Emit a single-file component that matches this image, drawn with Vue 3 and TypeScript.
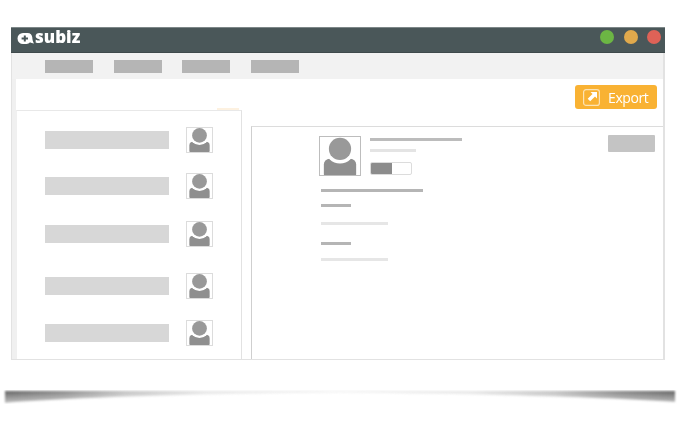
<script setup lang="ts">
const navItems = [1, 2, 3, 4];
const rows = [1, 2, 3, 4, 5];
</script>

<template>
  <div class="page">
    <div class="window">
      <header class="titlebar">
        <div class="logo">
          <svg class="logo-mark" width="17" height="11" viewBox="0 0 17 11">
            <path d="M6 0h4.500c3 0 4.500 2 4.800 4.500.1 2 .5 4 1.700 6-1.500-.1-3-.5-4-1.200C12 10.300 11 11 9.500 11H6A5.500 5.500 0 0 1 6 0z" fill="#fff" />
            <path d="M6.800 2.600h2v2h2.200v2H8.800v2h-2v-2H4.600v-2h2.200z" fill="#4a5759" />
          </svg>
          <span class="logo-text">subiz</span>
        </div>
        <div class="dots">
          <span class="dot green"></span>
          <span class="dot amber"></span>
          <span class="dot red"></span>
        </div>
      </header>

      <nav class="nav">
        <span v-for="n in navItems" :key="n" class="nav-item"></span>
      </nav>

      <div class="content">
        <div class="toolbar">
          <button class="export">
            <svg width="17" height="17" viewBox="0 0 17 17">
              <rect x="0.600" y="0.600" width="15.800" height="15.800" rx="2.500" fill="none" stroke="#fce3b4" stroke-width="1.200" />
              <path d="M7.500 3h6.500v6.500l-2-2-4.800 4.800-2.500-2.500 4.800-4.800z" fill="#fff" />
            </svg>
            <span>Export</span>
          </button>
        </div>

        <div class="panels">
          <aside class="list">
            <div v-for="r in rows" :key="r" class="row">
              <span class="row-bar"></span>
              <span class="avatar small">
                <svg viewBox="0 0 27 26">
                  <rect x="2.500" y="15" width="22" height="13" rx="4" fill="#8f8f8f" />
                  <circle cx="13.500" cy="8" r="10.500" fill="#fff" />
                  <circle cx="13.500" cy="8" r="8" fill="#999" />
                </svg>
              </span>
            </div>
          </aside>

          <main class="detail">
            <div class="detail-top">
              <span class="avatar big">
                <svg viewBox="0 0 42 40">
                  <rect x="4" y="23" width="34" height="22" rx="6" fill="#8f8f8f" />
                  <circle cx="21" cy="12.500" r="15.500" fill="#fff" />
                  <circle cx="21" cy="12.500" r="11.700" fill="#999" />
                </svg>
              </span>
              <div class="summary">
                <span class="line name"></span>
                <span class="line sub"></span>
                <span class="toggle"><span class="toggle-on"></span></span>
              </div>
              <span class="action"></span>
            </div>
            <div class="fields">
              <span class="line heading"></span>
              <span class="line label"></span>
              <span class="line value"></span>
              <span class="line label second"></span>
              <span class="line value last"></span>
            </div>
          </main>
        </div>
      </div>
    </div>

    <svg class="shadow" width="680" height="16" viewBox="0 0 680 16">
      <defs>
        <linearGradient id="sh" x1="0" x2="1" y1="0" y2="0">
          <stop offset="0" stop-color="#5c5c5c" />
          <stop offset="0.08" stop-color="#808080" />
          <stop offset="0.18" stop-color="#c0c0c0" />
          <stop offset="0.3" stop-color="#e6e6e6" />
          <stop offset="0.5" stop-color="#f0f0f0" />
          <stop offset="0.7" stop-color="#e6e6e6" />
          <stop offset="0.82" stop-color="#c0c0c0" />
          <stop offset="0.92" stop-color="#808080" />
          <stop offset="1" stop-color="#5c5c5c" />
        </linearGradient>
        <linearGradient id="fade" x1="0" x2="0" y1="0" y2="1">
          <stop offset="0" stop-color="#fff" />
          <stop offset="1" stop-color="#555" />
        </linearGradient>
        <mask id="fadeMask" maskUnits="userSpaceOnUse" x="0" y="0" width="680" height="16">
          <rect width="680" height="14" fill="url(#fade)" />
        </mask>
        <filter id="soft" x="-5%" y="-50%" width="110%" height="200%"><feGaussianBlur stdDeviation="1" /></filter>
      </defs>
      <g mask="url(#fadeMask)">
        <path d="M5 1H675V12C600 7 480 4 340 2.500 200 4 80 7 5 13z" fill="url(#sh)" filter="url(#soft)" />
      </g>
    </svg>
  </div>
</template>

<style scoped>
.page {
  width: 680px;
  height: 421px;
  overflow: hidden;
  padding-top: 27px;
  box-sizing: border-box;
  background: #fff;
  font-family: "Open Sans", "Liberation Sans", sans-serif;
}
.window {
  width: 654px;
  height: 333px;
  margin-left: 11px;
  display: flex;
  flex-direction: column;
  background: #f0f0f0;
  box-sizing: border-box;
  border-right: 2px solid #e2e2e2;
  border-bottom: 1px solid #e2e2e2;
  border-left: 1px solid #e2e2e2;
  filter: blur(0.35px);
}
.titlebar {
  height: 26px;
  margin: 0 -2px 0 -1px;
  padding: 0 4px 0 6px;
  flex: none;
  display: flex;
  align-items: center;
  justify-content: space-between;
  background: #4a5759;
  border-top: 1px solid #7d8788;
  border-bottom: 1px solid #3f4a4c;
  box-sizing: border-box;
}
.logo {
  display: flex;
  align-items: flex-end;
  gap: 1px;
  margin-top: -6px;
}
.logo-mark {
  margin-bottom: 2px;
}
.logo-text {
  color: #fff;
  font-family: "Open Sans", sans-serif;
  font-size: 17px;
  font-weight: 800;
  line-height: 18px;
}
.dots {
  display: flex;
  gap: 9.500px;
  margin-top: -6px;
}
.dot {
  width: 14px;
  height: 14px;
  border-radius: 50%;
}
.green { background: #6cb644; }
.amber { background: #e0a94c; }
.red { background: #de6257; }
.nav {
  height: 26px;
  flex: none;
  display: flex;
  align-items: flex-start;
  gap: 20.500px;
  padding: 7px 0 0 33px;
  box-sizing: border-box;
  background: #f2f2f2;
}
.nav-item {
  width: 48px;
  height: 13px;
  background: #b5b5b5;
}
.content {
  flex: 1;
  margin: 0 0 0 4px;
  display: flex;
  flex-direction: column;
  background: #fff;
}
.toolbar {
  height: 31px;
  flex: none;
  display: flex;
  justify-content: flex-end;
  align-items: flex-start;
  padding: 6px 6px 0 0;
  box-sizing: border-box;
}
.export {
  width: 82px;
  height: 24px;
  display: flex;
  align-items: center;
  gap: 8px;
  padding: 0 0 0 8px;
  border: none;
  border-radius: 3px;
  background: #f9b233;
  color: #fff;
  font-family: "Open Sans", sans-serif;
  font-size: 14px;
  letter-spacing: -0.400px;
  box-sizing: border-box;
}
.panels {
  flex: 1;
  display: flex;
  min-height: 0;
}
.list {
  position: relative;
  width: 226px;
  margin-right: 9px;
  padding-top: 16px;
  flex: none;
  border-top: 1px solid #e8e8e8;
  border-right: 1px solid #e2e2e2;
  border-left: 1px solid #f0f0f0;
  box-sizing: border-box;
  display: flex;
  flex-direction: column;
}
.list::before {
  content: "";
  position: absolute;
  top: -3px;
  left: 200px;
  width: 22px;
  height: 2px;
  background: #fdf1e0;
}
.row {
  display: flex;
  align-items: center;
  padding-left: 28px;
  height: 26px;
  flex: none;
}
.row + .row { margin-top: 20px; }
.row:nth-child(3) { margin-top: 22px; }
.row:nth-child(4) { margin-top: 26px; }
.row:nth-child(5) { margin-top: 21px; }
.row-bar {
  width: 124px;
  height: 18px;
  background: #d7d7d7;
}
.avatar {
  display: block;
  flex: none;
  box-sizing: border-box;
  background: #fff;
  border: 1px solid #dcdcdc;
  overflow: hidden;
}
.avatar svg {
  display: block;
  width: 100%;
  height: 100%;
}
.avatar.small {
  width: 27px;
  height: 26px;
  margin-left: 17px;
}
.avatar.big {
  width: 42px;
  height: 40px;
  border-color: #bdbdbd;
}
.detail {
  flex: 1;
  margin-top: 16px;
  padding: 9px 8px 0 67px;
  background: #fff;
  border-top: 1px solid #dcdcdc;
  border-left: 1px solid #cfcfcf;
  box-sizing: border-box;
}
.detail-top {
  display: flex;
  align-items: flex-start;
}
.summary {
  display: flex;
  flex-direction: column;
  align-items: flex-start;
  margin: 2px 0 0 9px;
  flex: 1;
}
.line {
  display: block;
  height: 3px;
}
.name { width: 92px; background: #bcbcbc; }
.sub { width: 46px; margin-top: 8px; background: #e4e4e4; }
.toggle {
  width: 42px;
  height: 13px;
  margin-top: 10px;
  border: 1px solid #dcdcdc;
  border-radius: 2px;
  box-sizing: border-box;
  background: #fff;
  overflow: hidden;
}
.toggle-on {
  display: block;
  width: 21px;
  height: 100%;
  background: #8c8c8c;
}
.action {
  width: 47px;
  height: 17px;
  margin: -1px 0 0 auto;
  background: #c4c4c4;
  border-radius: 1px;
  flex: none;
}
.fields {
  margin: 13px 0 0 2px;
}
.heading { width: 102px; background: #b5b5b5; }
.label { width: 30px; margin-top: 12px; background: #b5b5b5; }
.value { width: 67px; margin-top: 15px; background: #e6e6e6; }
.label.second { margin-top: 17px; }
.value.last { margin-top: 13px; }
.shadow {
  display: block;
  margin-top: 30px;
}
</style>
